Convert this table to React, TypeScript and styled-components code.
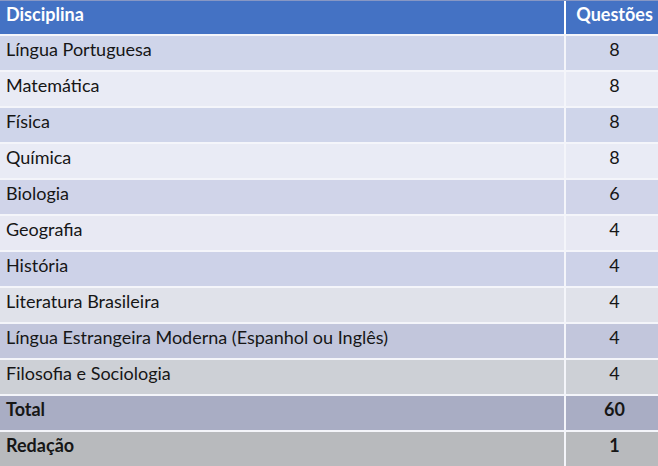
import React from 'react'
import styled, { createGlobalStyle } from 'styled-components'

const GlobalStyle = createGlobalStyle`
  html, body {
    margin: 0;
    padding: 0;
    background: #ffffff;
    overflow: hidden;
  }
`

type Subject = {
  name: string
  count: number
  bg: string
  bold?: boolean
}

const subjects: Subject[] = [
  { name: 'Língua Portuguesa', count: 8, bg: '#cfd5ea' },
  { name: 'Matemática', count: 8, bg: '#e9ebf5' },
  { name: 'Física', count: 8, bg: '#cfd5ea' },
  { name: 'Química', count: 8, bg: '#e9ebf5' },
  { name: 'Biologia', count: 6, bg: '#d0d4e9' },
  { name: 'Geografia', count: 4, bg: '#e8e9f3' },
  { name: 'História', count: 4, bg: '#cdd2e8' },
  { name: 'Literatura Brasileira', count: 4, bg: '#e0e2ea' },
  { name: 'Língua Estrangeira Moderna (Espanhol ou Inglês)', count: 4, bg: '#c2c6dc' },
  { name: 'Filosofia e Sociologia', count: 4, bg: '#cdd0d6' },
  { name: 'Total', count: 60, bg: '#a9adc4', bold: true },
  { name: 'Redação', count: 1, bg: '#b8babd', bold: true },
]

const App: React.FC = () => {
  return (
    <>
      <GlobalStyle />
      <Table>
        <HeaderRow>
          <HeadCell>Disciplina</HeadCell>
          <HeadCell $center>Questões</HeadCell>
        </HeaderRow>
        {subjects.map(s => (
          <Row key={s.name} $bg={s.bg}>
            <Cell $bold={s.bold}>{s.name}</Cell>
            <Cell $bold={s.bold} $center>{s.count}</Cell>
          </Row>
        ))}
      </Table>
    </>
  )
}

export default App

const Table = styled.div`
  width: 658px;
  height: 466px;
  display: flex;
  flex-direction: column;
  background: #ffffff;
  font-family: Lato, 'Open Sans', sans-serif;
  color: #161616;
`

const HeaderRow = styled.div`
  display: grid;
  grid-template-columns: 1fr 92px;
  column-gap: 2px;
  height: 34px;
  border-top: 1px solid #8797c4;
  box-sizing: border-box;
  background: #ffffff;
`

const HeadCell = styled.div<{ $center?: boolean }>`
  display: flex;
  align-items: center;
  justify-content: ${p => (p.$center ? 'center' : 'flex-start')};
  padding: 0 0 8px ${p => (p.$center ? '5px' : '6px')};
  background: #4472c4;
  color: #ffffff;
  font-weight: 700;
  font-size: 18px;
`

const Row = styled.div<{ $bg: string }>`
  display: grid;
  grid-template-columns: 1fr 92px;
  column-gap: 2px;
  height: 36px;
  border-top: 2px solid #f4f5fa;
  box-sizing: border-box;
  background: #f4f5fa;

  & > div {
    background: ${p => p.$bg};
  }
`

const Cell = styled.div<{ $center?: boolean; $bold?: boolean }>`
  display: flex;
  align-items: center;
  justify-content: ${p => (p.$center ? 'center' : 'flex-start')};
  padding: 0 0 9px ${p => (p.$center ? '5px' : '6px')};
  font-size: 18px;
  font-weight: ${p => (p.$bold ? 700 : 400)};
`
